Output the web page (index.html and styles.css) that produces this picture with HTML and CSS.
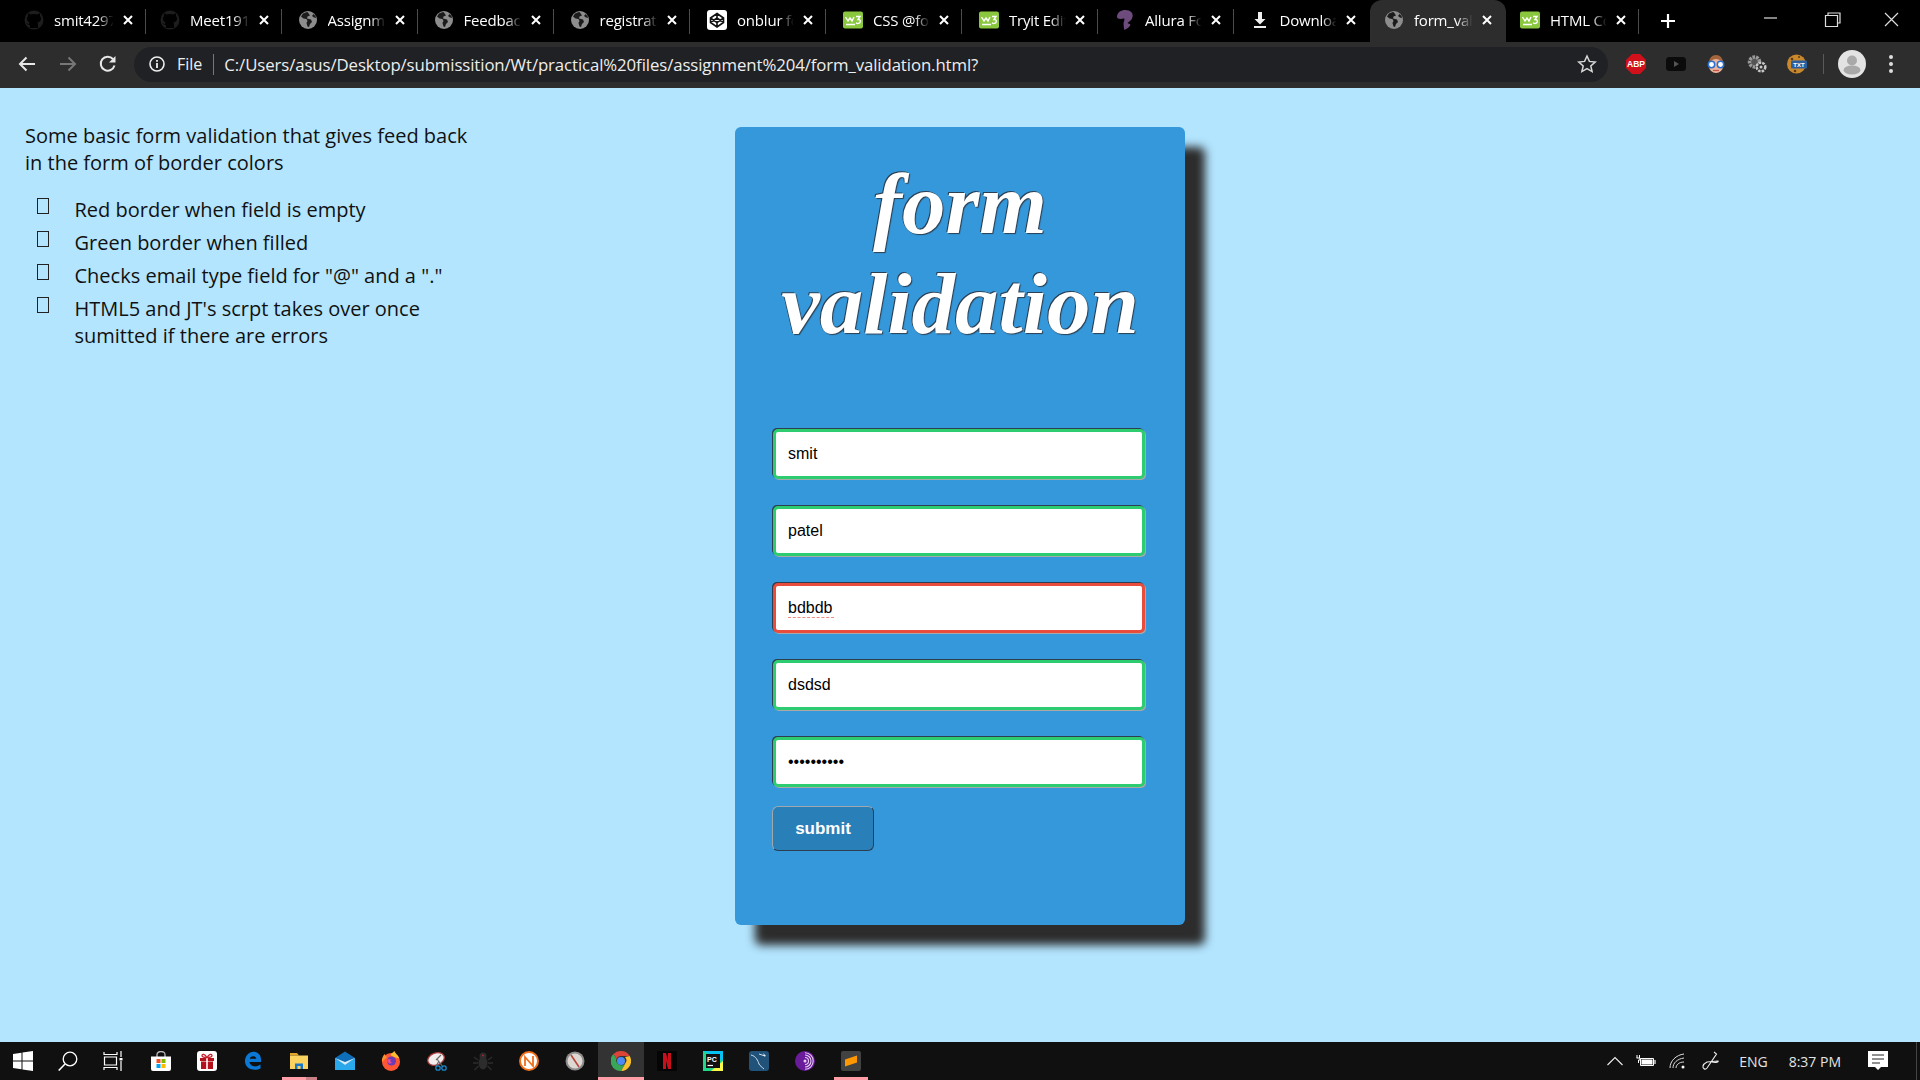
FILE: index.html
```html
<!DOCTYPE html>
<html lang="en">
<head>
<meta charset="utf-8">
<title>form validation</title>
<link rel="stylesheet" href="styles.css">
</head>
<body>
<svg class="sprites" xmlns="http://www.w3.org/2000/svg">
  <symbol id="i-github" viewBox="0 0 20 20"><circle cx="10" cy="10" r="9.5" fill="#1d1d1d"/><path d="M6 18v-3c-2 .3-3-1-3.500-2 1 .3 1.800 1 2.500 1.500 0-1 .3-1.500.8-2C3.800 12 3 10.500 3 8.500c0-1 .4-1.800 1-2.500-.2-.8-.1-1.700.2-2.500 1 0 1.900.6 2.600 1.100a9 9 0 0 1 6.400 0c.7-.5 1.600-1.100 2.600-1.100.3.800.4 1.700.2 2.500.6.700 1 1.500 1 2.500 0 2-.8 3.500-3.800 4 .5.500.8 1 .8 2v3.500H6z" fill="#000"/></symbol>
  <symbol id="i-globe" viewBox="0 0 20 20"><circle cx="10" cy="10" r="9" fill="#8d8d8d"/><path d="M9 2 5 3.500 3 6.500l2.500 2 3 .5 1 2-1 2 1 3.500 1.500.5 1-3 2-2-1-2.500-4-1 .5-2 2.500-1L10 2.500zM15.500 4l-1.500 2 2 1.500 2 .5-.5-2z" fill="#1b1b1b"/></symbol>
  <symbol id="i-codepen" viewBox="0 0 20 20"><rect width="20" height="20" rx="3" fill="#fff"/><path d="M10 3.500 16.500 8v4.500L10 17l-6.500-4.500V8zM10 3.500v4M10 13v4M3.500 8 10 12.500 16.500 8M3.500 12.500 10 8l6.500 4.500" fill="none" stroke="#111" stroke-width="1.600"/></symbol>
  <symbol id="i-w3" viewBox="0 0 20 20"><rect width="20" height="17" y="1.500" rx="2" fill="#8ac73f"/><path d="M2.500 7 5 11l2-3 2 3 2-4M13 6.500h4l-2 3c2 0 2.500 1 2.200 2.500-.4 1.500-2.700 2-4.200.8M3 14.500h9" fill="none" stroke="#fff" stroke-width="1.400"/></symbol>
  <symbol id="i-allura" viewBox="0 0 20 20"><path d="M2 7C2 2.500 6 0 10.500 0c5 0 8 3 7 7-.5 3-3 4-5 6 1 .5 2.500 1 3 2-1 2-4 4-6 5-1-2-.5-4-1-6 0-2 1-4 1-5-.5-1-2 0-4 0-2 0-3.500-1-3.500-2z" fill="#6d4c7d"/></symbol>
  <symbol id="i-download" viewBox="0 0 20 20"><path d="M8 2h4v7h3.500L10 14.500 4.500 9H8zM4 16h12v2H4z" fill="#eee"/></symbol>
  <symbol id="i-close" viewBox="0 0 12 12"><path d="M2 2l8 8M10 2l-8 8" stroke="#fff" stroke-width="2" fill="none"/></symbol>
</svg>

<header class="tabstrip">
  <div class="tab sep"><svg class="fav"><use href="#i-github"/></svg><span class="tab-title">smit4297</span><svg class="tab-x"><use href="#i-close"/></svg></div>
  <div class="tab sep"><svg class="fav"><use href="#i-github"/></svg><span class="tab-title">Meet1918</span><svg class="tab-x"><use href="#i-close"/></svg></div>
  <div class="tab sep nudge"><svg class="fav"><use href="#i-globe"/></svg><span class="tab-title">Assignment</span><svg class="tab-x"><use href="#i-close"/></svg></div>
  <div class="tab sep nudge"><svg class="fav"><use href="#i-globe"/></svg><span class="tab-title">Feedback</span><svg class="tab-x"><use href="#i-close"/></svg></div>
  <div class="tab sep nudge"><svg class="fav"><use href="#i-globe"/></svg><span class="tab-title">registration</span><svg class="tab-x"><use href="#i-close"/></svg></div>
  <div class="tab sep shift"><svg class="fav"><use href="#i-codepen"/></svg><span class="tab-title">onblur form</span><svg class="tab-x"><use href="#i-close"/></svg></div>
  <div class="tab sep shift"><svg class="fav"><use href="#i-w3"/></svg><span class="tab-title">CSS @font</span><svg class="tab-x"><use href="#i-close"/></svg></div>
  <div class="tab sep shift"><svg class="fav"><use href="#i-w3"/></svg><span class="tab-title">Tryit Editor</span><svg class="tab-x"><use href="#i-close"/></svg></div>
  <div class="tab sep shift"><svg class="fav"><use href="#i-allura"/></svg><span class="tab-title">Allura Font</span><svg class="tab-x"><use href="#i-close"/></svg></div>
  <div class="tab nudge tight"><svg class="fav"><use href="#i-download"/></svg><span class="tab-title">Download</span><svg class="tab-x"><use href="#i-close"/></svg></div>
  <div class="tab active tight"><svg class="fav"><use href="#i-globe"/></svg><span class="tab-title">form_validation</span><svg class="tab-x"><use href="#i-close"/></svg></div>
  <div class="tab sep last"><svg class="fav"><use href="#i-w3"/></svg><span class="tab-title">HTML Code</span><svg class="tab-x"><use href="#i-close"/></svg></div>
  <svg class="newtab" viewBox="0 0 16 16"><path d="M8 1v14M1 8h14" stroke="#fff" stroke-width="2.200"/></svg>
  <div class="winbtns">
    <svg class="win" viewBox="0 0 46 20"><path d="M12 8h13" stroke="#ddd" stroke-width="1.200"/></svg>
    <svg class="win" viewBox="0 0 46 20"><path d="M18 5.500V3h12v10h-2.500M15.500 5.500h12v11h-12z" stroke="#ddd" stroke-width="1.200" fill="none"/></svg>
    <svg class="win" viewBox="0 0 46 20"><path d="M17 3l13 13M30 3 17 16" stroke="#ddd" stroke-width="1.200" fill="none"/></svg>
  </div>
</header>

<nav class="toolbar">
  <div class="navbtn"><svg viewBox="0 0 20 20"><path d="M18 10H3M9.500 3.500 3 10l6.500 6.500" stroke="#e8e8e8" stroke-width="2" fill="none"/></svg></div>
  <div class="navbtn"><svg viewBox="0 0 20 20"><path d="M2 10h15M10.500 3.500 17 10l-6.500 6.500" stroke="#777" stroke-width="2" fill="none"/></svg></div>
  <div class="navbtn"><svg viewBox="0 0 20 20"><path d="M16.500 11.500A7 7 0 1 1 15 5" stroke="#e8e8e8" stroke-width="2" fill="none"/><path d="M17.500 2v6.500H11z" fill="#e8e8e8"/></svg></div>
  <div class="omnibox">
    <svg class="info" viewBox="0 0 18 18"><circle cx="9" cy="9" r="7" stroke="#eee" stroke-width="1.600" fill="none"/><path d="M9 8v5M9 5v1.800" stroke="#eee" stroke-width="1.800"/></svg>
    <span class="scheme">File</span>
    <span class="omni-sep"></span>
    <span class="url">C:/Users/asus/Desktop/submissition/Wt/practical%20files/assignment%204/form_validation.html?</span>
    <svg class="star" viewBox="0 0 20 20"><path d="M10 2l2.400 5.400 5.800.6-4.400 3.900 1.300 5.700L10 14.700l-5.100 2.900 1.300-5.700L1.800 8l5.800-.6z" stroke="#d8d8d8" stroke-width="1.500" fill="none"/></svg>
  </div>
  <div class="exts">
    <div class="ext"><svg viewBox="0 0 20 20"><path d="M6 0h8l6 6v8l-6 6H6l-6-6V6z" fill="#d0111b"/><text x="10" y="13.200" class="abp-text">ABP</text></svg></div>
    <div class="ext"><svg viewBox="0 0 20 20"><rect y="3" width="20" height="14" rx="3.500" fill="#0b0b0b"/><path d="M8 7l5 3-5 3z" fill="#555"/></svg></div>
    <div class="ext"><svg viewBox="0 0 20 20"><path d="M3 9c0-5 3-8 7-8s7 3 7 8z" fill="#a5653c"/><circle cx="10" cy="12" r="7" fill="#eeb39b"/><circle cx="5.500" cy="10.500" r="3.200" fill="#fff" stroke="#2a6fd0" stroke-width="1.500"/><circle cx="14.500" cy="10.500" r="3.200" fill="#fff" stroke="#2a6fd0" stroke-width="1.500"/><path d="M7 16.500h6" stroke="#c3534d" stroke-width="1.200"/></svg></div>
    <div class="ext"><svg viewBox="0 0 20 20"><circle cx="7.500" cy="8" r="5" fill="#555" stroke="#9a9a9a" stroke-width="3.500" stroke-dasharray="2.500 1"/><circle cx="14" cy="13" r="4.300" fill="#2d2d2d" stroke="#c8c8c8" stroke-width="2.500" stroke-dasharray="2.500 1"/><circle cx="14" cy="13" r="1.500" fill="#c8c8c8"/></svg></div>
    <div class="ext"><svg viewBox="0 0 20 20"><circle cx="9.500" cy="10" r="9.500" fill="#c9882c"/><circle cx="5" cy="5" r="1.300" fill="#5f3a10"/><circle cx="8" cy="17" r="1.300" fill="#5f3a10"/><circle cx="12" cy="3" r="1" fill="#5f3a10"/><rect x="4" y="6.500" width="16" height="8" rx="1" fill="#2b5f9e"/><text x="12" y="13" class="txt-text">TXT</text></svg></div>
  </div>
  <span class="tool-sep"></span>
  <div class="ext avatar"><svg viewBox="0 0 28 28"><circle cx="14" cy="14" r="14" fill="#e3e3e3"/><circle cx="14" cy="10.500" r="5" fill="#a9a9a9"/><ellipse cx="14" cy="20" rx="8.500" ry="4.500" fill="#a9a9a9"/></svg></div>
  <div class="ext dots"><svg viewBox="0 0 6 20"><circle cx="3" cy="3" r="2" fill="#ddd"/><circle cx="3" cy="10" r="2" fill="#ddd"/><circle cx="3" cy="17" r="2" fill="#ddd"/></svg></div>
</nav>

<main class="page">
  <aside class="intro">
    <p class="lead">Some basic form validation that gives feed back in the form of border colors</p>
    <ul class="rules">
      <li>Red border when field is empty</li>
      <li>Green border when filled</li>
      <li>Checks email type field for "@" and a "."</li>
      <li>HTML5 and JT's scrpt takes over once sumitted if there are errors</li>
    </ul>
  </aside>
  <section class="card">
    <h1 class="title">form<br>validation</h1>
    <form class="form">
      <input class="field ok" type="text" value="smit">
      <input class="field ok" type="text" value="patel">
      <div class="field-wrap">
        <input class="field bad" type="text" value="bdbdb">
        <span class="squiggle"></span>
      </div>
      <input class="field ok" type="text" value="dsdsd">
      <input class="field ok" type="password" value="abcdefghij">
      <button class="submit" type="button">submit</button>
    </form>
  </section>
</main>

<footer class="taskbar">
  <div class="task narrow"><svg viewBox="0 0 20 20"><path d="M0 3l8.500-1.300V9.500H0zM9.500 1.500 20 0v9.500H9.500zM0 10.500h8.500v7.800L0 17zM9.500 10.500H20V20L9.500 18.500z" fill="#fff"/></svg></div>
  <div class="task narrow"><svg viewBox="0 0 20 20"><circle cx="12" cy="8" r="6.800" stroke="#fff" stroke-width="1.300" fill="none"/><path d="M7 13 .7 19.500" stroke="#fff" stroke-width="1.600"/></svg></div>
  <div class="task narrow last-narrow"><svg viewBox="0 0 20 20"><path d="M1 1v2.500h13V1M1 19v-2.500h13V19M1.500 6h12v8h-12zM18 0v6M18 10v10" stroke="#fff" stroke-width="1.200" fill="none"/><rect x="16.500" y="7" width="3" height="2.400" fill="#fff"/></svg></div>
  <div class="task"><svg viewBox="0 0 20 20"><path d="M6 6V3.500a4 3 0 0 1 8 0V6" stroke="#bbb" stroke-width="1.300" fill="none"/><path d="M0 5.500h20V18a2 2 0 0 1-2 2H2a2 2 0 0 1-2-2z" fill="#fff"/><rect x="5.500" y="8" width="4" height="4" fill="#f25022"/><rect x="10.500" y="8" width="4" height="4" fill="#7fba00"/><rect x="5.500" y="13" width="4" height="4" fill="#00a4ef"/><rect x="10.500" y="13" width="4" height="4" fill="#ffb900"/></svg></div>
  <div class="task"><svg viewBox="0 0 20 20"><rect width="20" height="20" rx="3" fill="#fff"/><path d="M3 7h14v3H3zM4 10.500h12V18H4z" fill="#b3121d"/><path d="M9.500 7v11M10.500 7v11" stroke="#fff" stroke-width=".8"/><path d="M10 6.500C8 3 5 2.500 5 4.500s3 2 5 2zM10 6.500c2-3.500 5-4 5-2s-3 2-5 2z" fill="none" stroke="#c9202b" stroke-width="1.300"/></svg></div>
  <div class="task"><svg viewBox="0 0 20 20"><path d="M18 11H6.500c.3 3 3.700 5 7 4.300 1.500-.3 3-1 4-1.800v4C12 20 3 19 2 11 1.500 5 6 .5 11 .7c4.500.2 7.700 4 7 10.300zM6.800 7.800h6.500c0-3-5.800-3.500-6.500 0z" fill="#0a78d4"/></svg></div>
  <div class="task explorer"><svg viewBox="0 0 20 20"><path d="M1 2h7l2 2.500H1z" fill="#e0a526"/><path d="M1 4.500h18V18H1z" fill="#fad25f"/><path d="M6 18v-5.500h8V18h-2.500v-3h-3v3z" fill="#1b76c4"/></svg></div>
  <div class="task"><svg viewBox="0 0 20 20"><path d="M0 7 10 .5 20 7v12H0z" fill="#0e6fb8"/><path d="M0 7l10 7 10-7v12H0z" fill="#29a9ec"/><path d="M0 7l10 7 10-7-10 4z" fill="#d6eefa"/></svg></div>
  <div class="task"><svg viewBox="0 0 20 20"><circle cx="10" cy="11" r="9" fill="#ff5634"/><path d="M10 4.500c-1-1.500 2-3 3.500-4.500.5 2.500 4 4 4.800 7.500L13 6z" fill="#ffbd2e"/><path d="M1 11C.5 7 2.500 4 4 3c0 1.500 1 2.500 2 3z" fill="#ff8f2e"/><circle cx="10.500" cy="10" r="4.500" fill="#6c3bb5"/><path d="M6 9c2-1.500 3-1 4 0-1 .5-1 2 1 2.500-2 2-5 .5-5-2.500z" fill="#e64c9c"/></svg></div>
  <div class="task"><svg viewBox="0 0 20 20"><ellipse cx="9" cy="8" rx="8.500" ry="6" fill="#f3eded" stroke="#a43c3c" stroke-width="1.300" transform="rotate(-20 9 8)"/><path d="M9 9 14 4M10 8l6 8M12 10l-3 5" stroke="#6b6b6b" stroke-width="1.200"/><circle cx="17" cy="17" r="2.200" fill="none" stroke="#1a87c9" stroke-width="1.300"/><circle cx="11" cy="17" r="2.200" fill="none" stroke="#1a87c9" stroke-width="1.300"/></svg></div>
  <div class="task"><svg viewBox="0 0 20 20"><ellipse cx="10" cy="12" rx="4.500" ry="6.500" fill="#2c2c2c"/><circle cx="10" cy="5" r="3.500" fill="#2c2c2c"/><path d="M9 4.500h2" stroke="#a5232a" stroke-width="1.400"/><path d="M5 9 1 6M5 12H0M5.500 15 1.500 19M15 9l4-3M15 12h5M14.500 15l4 4" stroke="#2c2c2c" stroke-width="1.500"/></svg></div>
  <div class="task"><svg viewBox="0 0 20 20"><circle cx="10" cy="10" r="9" fill="#fff" stroke="#ee6f1c" stroke-width="2"/><path d="M6 15V6l8 9V5" fill="none" stroke="#ee6f1c" stroke-width="1.800"/></svg></div>
  <div class="task"><svg viewBox="0 0 20 20"><circle cx="10" cy="10" r="9.500" fill="#8d8d8d"/><circle cx="10" cy="10" r="7.500" fill="#ddd8d2"/><path d="M6 4l8 12" stroke="#b5463c" stroke-width="1.600"/></svg></div>
  <div class="task chrome pinned"><svg viewBox="0 0 20 20"><path d="M10 0a10 10 0 0 1 8.700 5H10a5 5 0 0 0-4.500 3L2.500 3A10 10 0 0 1 10 0z" fill="#db4437"/><path d="M18.700 5A10 10 0 0 1 10 20l4.200-7.500A5 5 0 0 0 14 6z" fill="#fbc02d"/><path d="M2.500 3a10 10 0 0 0 7.500 17l4.200-7.500a5 5 0 0 1-8.700-4.500z" fill="#3aa757"/><circle cx="10" cy="10" r="4" fill="#4c8bf5"/></svg></div>
  <div class="task"><svg viewBox="0 0 20 20"><rect width="20" height="20" fill="#050505"/><path d="M6 2h3l2 8V2h3v16h-3L9 10v8H6z" fill="#c8101a"/></svg></div>
  <div class="task"><svg viewBox="0 0 20 20"><rect width="20" height="20" fill="#21d789"/><path d="M0 0h20v10z" fill="#07c3f2"/><path d="M20 10v10H8z" fill="#fcf84a"/><rect x="3" y="3" width="14" height="14" fill="#111"/><text x="4" y="10.500" class="pc-text">PC</text><path d="M4.500 14.500H10" stroke="#fff" stroke-width="1.200"/></svg></div>
  <div class="task"><svg viewBox="0 0 20 20"><rect width="20" height="20" rx="3" fill="#21527a"/><path d="M2 4c5 1 7 6 8 9 1 2 3 3 5 5M10 3l6 2" stroke="#cfe0ee" stroke-width="1" fill="none"/><path d="M14 2l3 3-1.500.5z" fill="#fff"/></svg></div>
  <div class="task"><svg viewBox="0 0 20 20"><circle cx="10" cy="10" r="10" fill="#6a1b9a"/><path d="M10 4a6 6 0 0 1 0 12M10 6.500a3.500 3.500 0 0 1 0 7M10 1.800a8.200 8.200 0 0 1 0 16.400" fill="none" stroke="#e6cbf2" stroke-width="1.100"/><circle cx="10" cy="10" r="1.500" fill="#e6cbf2"/></svg></div>
  <div class="task pinned"><svg viewBox="0 0 20 20"><rect width="20" height="20" rx="2" fill="#424242"/><path d="M4 8.500 16 4.500v3.500L4 12zM16 11.500 4 15.500V12l12-4z" fill="#ff9800"/></svg></div>
  <div class="tray">
    <svg class="tray-chev" viewBox="0 0 16 10"><path d="M.5 9 8 1.500 15.500 9" stroke="#eee" stroke-width="1.100" fill="none"/></svg>
    <svg class="tray-batt" viewBox="0 0 20 12"><path d="M4.500 3.500h13v7h-13z" fill="none" stroke="#fff"/><path d="M5.500 4.500h11v5h-11z" fill="#fff"/><path d="M19 5v4" stroke="#fff" stroke-width="1.200"/><path d="M1 0v3M3.500 0v3M.5 3h3.500v2H2.500v3" stroke="#fff" fill="none"/></svg>
    <svg class="tray-wifi" viewBox="0 0 16 16"><path d="M1 15C1 8 7 2 15 1M4 15c0-5 4-9 11-10M7 15c0-3 3-6 8-6" stroke="#ddd" stroke-width="1" fill="none"/><circle cx="14" cy="14" r="1.500" fill="#fff"/></svg>
    <svg class="tray-pen" viewBox="0 0 20 20"><path d="M14 1l2.500 2L7 17c-1.500 2-4.500 1-4-2 .5-2 2-3 4-4l11-1c1 1-2 2-6 1" stroke="#eee" stroke-width="1.100" fill="none"/></svg>
    <span class="tray-lang">ENG</span>
    <span class="tray-time">8:37 PM</span>
    <svg class="tray-note" viewBox="0 0 20 20"><path d="M0 0h20v16h-7l-3 3-3-3H0z" fill="#fff"/><path d="M4 4h12M4 8h12M4 12h8" stroke="#222" stroke-width="1"/></svg>
    <span class="show-desktop"></span>
  </div>
</footer>
</body>
</html>
```
FILE: styles.css
```css
* { box-sizing: border-box; }
html, body { margin: 0; height: 100%; }
body {
  display: flex;
  flex-direction: column;
  height: 1080px;
  overflow: hidden;
  background: #b3e5ff;
  font-family: "Open Sans", sans-serif;
}
.sprites { display: none; }

/* tab strip */
.tabstrip {
  display: flex;
  flex: none;
  height: 42px;
  padding-left: 10px;
  background: #000;
  color: #fff;
}
.tab {
  position: relative;
  display: flex;
  flex: none;
  align-items: center;
  width: 136px;
  height: 42px;
  padding: 0 12px 2px 14px;
  font-size: 15px;
  letter-spacing: -0.2px;
}
.nudge { padding-left: 15.500px; }
.shift { padding-left: 17px; }
.tight { padding-right: 13.500px; }
.last { width: 133px; }
.sep::after {
  content: "";
  position: absolute;
  right: 0;
  top: 9px;
  width: 1px;
  height: 25px;
  background: #4b4b4b;
}
.active {
  background: #2d2d2d;
  border-radius: 12px 12px 0 0;
}
.fav { flex: none; width: 20px; height: 20px; }
.tab-title {
  flex: 1;
  min-width: 0;
  margin-left: 10px;
  overflow: hidden;
  white-space: nowrap;
  -webkit-mask-image: linear-gradient(to right, #000 70%, transparent 96%);
  mask-image: linear-gradient(to right, #000 70%, transparent 96%);
}
.tab-x { flex: none; width: 12px; height: 12px; margin-left: 6px; }
.newtab { flex: none; width: 16px; height: 16px; margin: 13px 0 0 21px; }
.winbtns { display: flex; margin-left: auto; }
.win { width: 58px; height: 20px; margin-top: 10px; }

/* toolbar */
.toolbar {
  display: flex;
  flex: none;
  align-items: center;
  height: 46px;
  padding: 0 0 2px 7px;
  background: #2d2d2d;
  color: #eee;
}
.navbtn {
  display: flex;
  flex: none;
  align-items: center;
  justify-content: center;
  width: 40.500px;
  height: 40px;
}
.navbtn svg { width: 20px; height: 20px; }
.omnibox {
  display: flex;
  flex: none;
  align-items: center;
  width: 1474px;
  height: 35px;
  margin-left: 5.500px;
  padding: 0 11px 0 14px;
  background: #202124;
  border-radius: 18px;
}
.info { flex: none; width: 18px; height: 18px; }
.scheme { margin-left: 11px; font-size: 16px; }
.omni-sep { width: 1px; height: 21px; margin: 0 10px 0 11px; background: #777; }
.url { flex: 1; font-size: 16.800px; letter-spacing: -0.1px; white-space: nowrap; }
.star { flex: none; width: 20px; height: 20px; }
.exts { display: flex; margin-left: 8px; }
.ext {
  display: flex;
  flex: none;
  align-items: center;
  justify-content: center;
  width: 40.200px;
  height: 40px;
}
.ext svg { width: 20px; height: 20px; }
.abp-text { font: 700 8.500px "Liberation Sans", sans-serif; fill: #fff; text-anchor: middle; }
.txt-text { font: 700 6px "Liberation Sans", sans-serif; fill: #fff; text-anchor: middle; }
.pc-text { font: 700 7px "Liberation Sans", sans-serif; fill: #fff; }
.tool-sep { flex: none; width: 1px; height: 20px; margin: 0 8px 0 6px; background: #5a5a5a; }
.avatar svg { width: 28px; height: 28px; }
.dots { width: 38px; }
.dots svg { width: 6px; height: 20px; }

/* page */
.page {
  display: flex;
  flex: 1;
  min-height: 0;
  align-items: flex-start;
  padding: 34px 0 0 25px;
  color: #111;
}
.intro { flex: none; width: 450px; font-size: 20px; line-height: 27px; }
.lead { margin: 0; }
.rules { margin: 20px 0 0; padding: 0; list-style: none; }
.rules li { display: flex; margin-bottom: 6px; }
.rules li::before {
  content: "";
  flex: none;
  width: 10px;
  height: 14px;
  margin: 2px 25.500px 0 12px;
  border: 1px solid #222;
  border-width: 1.500px 1px;
}
.card {
  flex: none;
  width: 450px;
  height: 798px;
  margin: 5px 0 0 260px;
  padding: 27px 38px 0;
  background: #3498db;
  border-radius: 6px;
  box-shadow: 20px 20px 10px #2c2c2c;
}
.title {
  margin: 0 0 75px;
  color: #fff;
  font: italic 700 87px/100px "Liberation Serif", serif;
  text-align: center;
  text-shadow: -1px -1px 0 #2c3e50, 1px 1px 1px #2c3e50;
}
.form { display: flex; flex-direction: column; align-items: flex-start; gap: 27px; }
.field-wrap { position: relative; display: flex; }
.field {
  width: 372px;
  height: 50px;
  padding: 0 12px;
  color: #000;
  background: #fff;
  font: 16px "Liberation Sans", sans-serif;
  border: 3px solid;
  border-radius: 5px;
  outline: none;
  box-shadow: -1px -1px 0 #2c3e50, 1px 1px 0 #a9a9a9;
}
.ok { border-color: #2ecc71; }
.bad { border-color: #e74c3c; }
.squiggle {
  position: absolute;
  left: 15px;
  top: 34px;
  width: 46px;
  border-top: 1px dashed #f08a80;
}
.submit {
  width: 102px;
  height: 45px;
  margin: -8px 0 0 -1px;
  color: #fff;
  background: #2980b9;
  font: 700 17px "Liberation Sans", sans-serif;
  border: 1px solid;
  border-color: #a0a8ae #2c3e50 #2c3e50 #a0a8ae;
  border-radius: 6px;
}

/* taskbar */
.taskbar {
  display: flex;
  flex: none;
  align-items: center;
  height: 38px;
  background: #101010;
}
.task {
  display: flex;
  flex: none;
  position: relative;
  align-items: center;
  justify-content: center;
  width: 46px;
  height: 38px;
}
.task svg { width: 20px; height: 20px; }
.narrow { width: 45px; }
.last-narrow { margin-right: 3px; }
.chrome { background: #333; }
.pinned::after {
  content: "";
  position: absolute;
  left: 6px;
  right: 6px;
  bottom: 0;
  height: 3px;
  background: #ff9ea6;
}
.chrome::after { left: 0; right: 0; }
.explorer::before {
  content: "";
  position: absolute;
  left: 6px;
  bottom: 0;
  width: 24px;
  height: 3px;
  background: #ff9ea6;
}
.explorer::after {
  content: "";
  position: absolute;
  left: 30px;
  bottom: 0;
  width: 11px;
  height: 3px;
  background: #c97f86;
}
.tray {
  display: flex;
  flex: 1;
  align-items: center;
  justify-content: flex-end;
  height: 38px;
  color: #e4e4e4;
  font-size: 14px;
}
.tray-chev { width: 16px; height: 10px; }
.tray-batt { width: 20px; height: 12px; margin-left: 13px; }
.tray-wifi { width: 16px; height: 16px; margin-left: 13px; }
.tray-pen { width: 20px; height: 20px; margin-left: 15px; }
.tray-lang { margin-left: 19px; }
.tray-time { margin-left: 21px; }
.tray-note { width: 20px; height: 20px; margin: 0 28px 0 27px; }
.show-desktop { width: 1px; height: 38px; margin-right: 3px; background: #444; }
```
